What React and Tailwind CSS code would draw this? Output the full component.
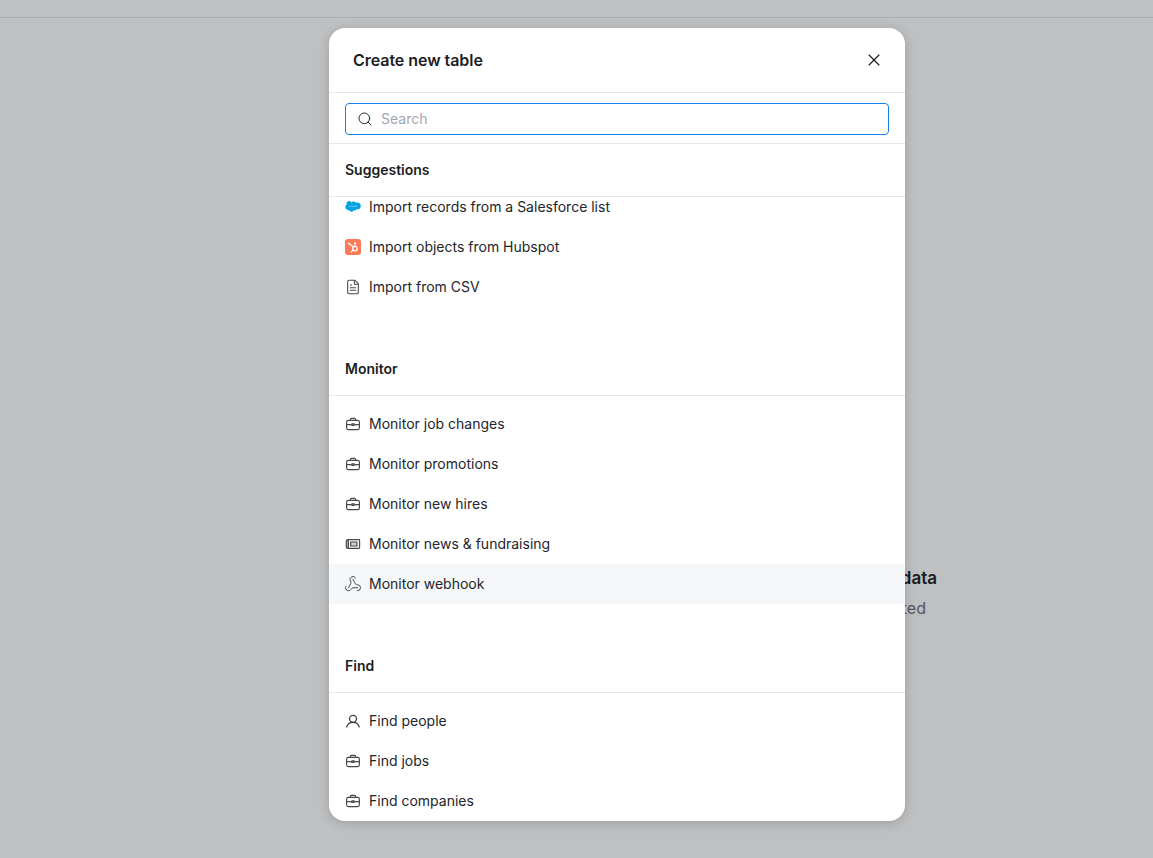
import { Search, X, FileText, Webhook } from "lucide-react";

const Briefcase = () => (
    <svg width="16" height="16" viewBox="0 0 16 16" fill="none" stroke="#45474e" strokeWidth="1.150" strokeLinecap="round" strokeLinejoin="round">
        <rect x="1.600" y="4.400" width="12.800" height="9.200" rx="1.800" />
        <path d="M5.400 4.400V3.300c0-.6.4-1 1-1h3.200c.6 0 1 .4 1 1v1.100" />
        <path d="M1.600 8.600h4.400M10 8.600h4.400" />
        <path d="M6.800 7.900h2.400v1.500H6.800z" />
    </svg>
);

const News = () => (
    <svg width="16" height="16" viewBox="0 0 16 16" fill="none" stroke="#45474e" strokeWidth="1.150" strokeLinejoin="round">
        <path d="M3 3.600h10.800c.4 0 .8.400.8.800v7.200c0 .4-.4.800-.8.800H3c-1 0-1.700-.6-1.700-1.500V5.100c0-.9.700-1.500 1.700-1.500Z" />
        <path d="M3.200 3.600v8.800" strokeWidth="1.500" />
        <rect x="5.600" y="6" width="6.400" height="4" fill="#45474e" fillOpacity=".25" />
    </svg>
);

const Person = () => (
    <svg width="16" height="16" viewBox="0 0 16 16" fill="none" stroke="#3a3c43" strokeWidth="1.250" strokeLinecap="round">
        <circle cx="8" cy="5.800" r="3.500" />
        <path d="M1.800 14c.6-2.600 2.800-4.700 6.200-4.700s5.600 2.100 6.200 4.700" />
    </svg>
);

const Salesforce = () => (
    <svg width="16" height="16" viewBox="0 0 16 16">
        <path d="M6.600 3.400c.5-.6 1.300-1 2.100-1 1 0 1.900.6 2.400 1.400.4-.2.9-.3 1.300-.3 1.800 0 3.400 1.500 3.400 3.400s-1.600 3.400-3.400 3.400h-.7c-.4.700-1.100 1.100-1.900 1.100-.3 0-.7-.1-1-.2-.4.900-1.300 1.500-2.300 1.500-1.100 0-2-.7-2.400-1.600-.2 0-.3.100-.5.100C1.900 11.200.4 9.800.4 8.100c0-1.100.6-2 1.400-2.500-.2-.3-.2-.7-.2-1.100 0-1.400 1.200-2.600 2.600-2.600.9 0 1.900.6 2.400 1.500Z" fill="#00a1e0" />
        <path d="M3.600 7.400c.8-.5 1.300.4 2.100 0s1.300-.5 2.100 0 1.400.3 2.200-.1 1.300-.2 2.300.1" stroke="#d8f2fc" strokeWidth=".6" fill="none" />
    </svg>
);

const Hubspot = () => (
    <svg width="16" height="16" viewBox="0 0 16 16" fill="none">
        <rect width="16" height="16" rx="3" fill="#ff7a59" />
        <circle cx="10" cy="9.600" r="2.300" stroke="#fff" strokeWidth="1.300" />
        <path d="M10 7.300V4.400M8.300 8 4.300 4.800M8.300 11.200l-1.700 1.500" stroke="#fff" strokeWidth="1.100" strokeLinecap="round" />
        <circle cx="10" cy="3.800" r=".9" fill="#fff" />
        <circle cx="3.900" cy="4.400" r=".9" fill="#fff" />
        <circle cx="6.300" cy="12.800" r=".8" fill="#fff" />
    </svg>
);

const icon = "text-[#45474e]";

const Row = ({ icon, label, active }) => (
    <div className={`flex items-center gap-2 h-10 px-4 text-sm text-[#23252b] ${active ? "bg-[#f6f7f9]" : ""}`}>
        <span className="flex w-4 h-4 items-center justify-center shrink-0">{icon}</span>
        <span>{label}</span>
    </div>
);

const Heading = ({ children }) => (
    <div className="flex items-center h-[53px] px-4 border-b border-[#e6e7ea] text-sm font-semibold text-[#1c1e23]">
        {children}
    </div>
);

export default function App() {
    return (
        <div className="relative h-[858px] overflow-hidden bg-[#bfc0c2] font-['Inter',sans-serif]">
            <div className="h-[18px] border-b border-[#adaeb0]" />
            <div className="flex flex-col items-end pt-[548px] pr-[216px]">
                <p className="text-[17px] leading-6 font-semibold text-[#1a1b1f]">Your table data</p>
                <p className="mt-[6px] mr-[11px] text-base leading-6 text-[#55575e]">Nothing created</p>
            </div>

            <div className="absolute left-[329px] top-[28px] flex flex-col w-[576px] h-[793px] overflow-hidden rounded-2xl bg-white shadow-[0_2px_12px_rgba(0,0,0,0.18)]">
                <div className="flex items-center justify-between h-[65px] shrink-0 pl-6 pr-[21px] border-b border-[#e6e7ea]">
                    <h2 className="text-base font-semibold tracking-[-0.05px] text-[#1c1e23]">Create new table</h2>
                    <X size={20} strokeWidth={1.4} className="text-[#1c1e23]" />
                </div>
                <div className="pt-[10px] pb-2 px-4 shrink-0 border-b border-[#e6e7ea]">
                    <div className="flex items-center gap-2 h-8 pl-[11px] pr-3 rounded border border-[#1581f0]">
                        <Search size={16} strokeWidth={1.5} className="text-[#23252b]" />
                        <span className="text-sm text-[#a3a6b1]">Search</span>
                    </div>
                </div>
                <Heading>Suggestions</Heading>
                <div className="flex-1 overflow-hidden">
                    <div className="-mt-[10px]">
                        <Row icon={<Salesforce />} label="Import records from a Salesforce list" />
                        <Row icon={<Hubspot />} label="Import objects from Hubspot" />
                        <Row icon={<FileText size={16} strokeWidth={1.6} className={icon} />} label="Import from CSV" />
                        <div className="h-9" />
                        <Heading>Monitor</Heading>
                        <div className="h-2" />
                        <Row icon={<Briefcase />} label="Monitor job changes" />
                        <Row icon={<Briefcase />} label="Monitor promotions" />
                        <Row icon={<Briefcase />} label="Monitor new hires" />
                        <Row icon={<News />} label="Monitor news & fundraising" />
                        <Row icon={<Webhook size={18} strokeWidth={1.3} className={`${icon} shrink-0`} />} label="Monitor webhook" active />
                        <div className="h-9" />
                        <Heading>Find</Heading>
                        <div className="h-2" />
                        <Row icon={<Person />} label="Find people" />
                        <Row icon={<Briefcase />} label="Find jobs" />
                        <Row icon={<Briefcase />} label="Find companies" />
                    </div>
                </div>
            </div>
        </div>
    );
}
